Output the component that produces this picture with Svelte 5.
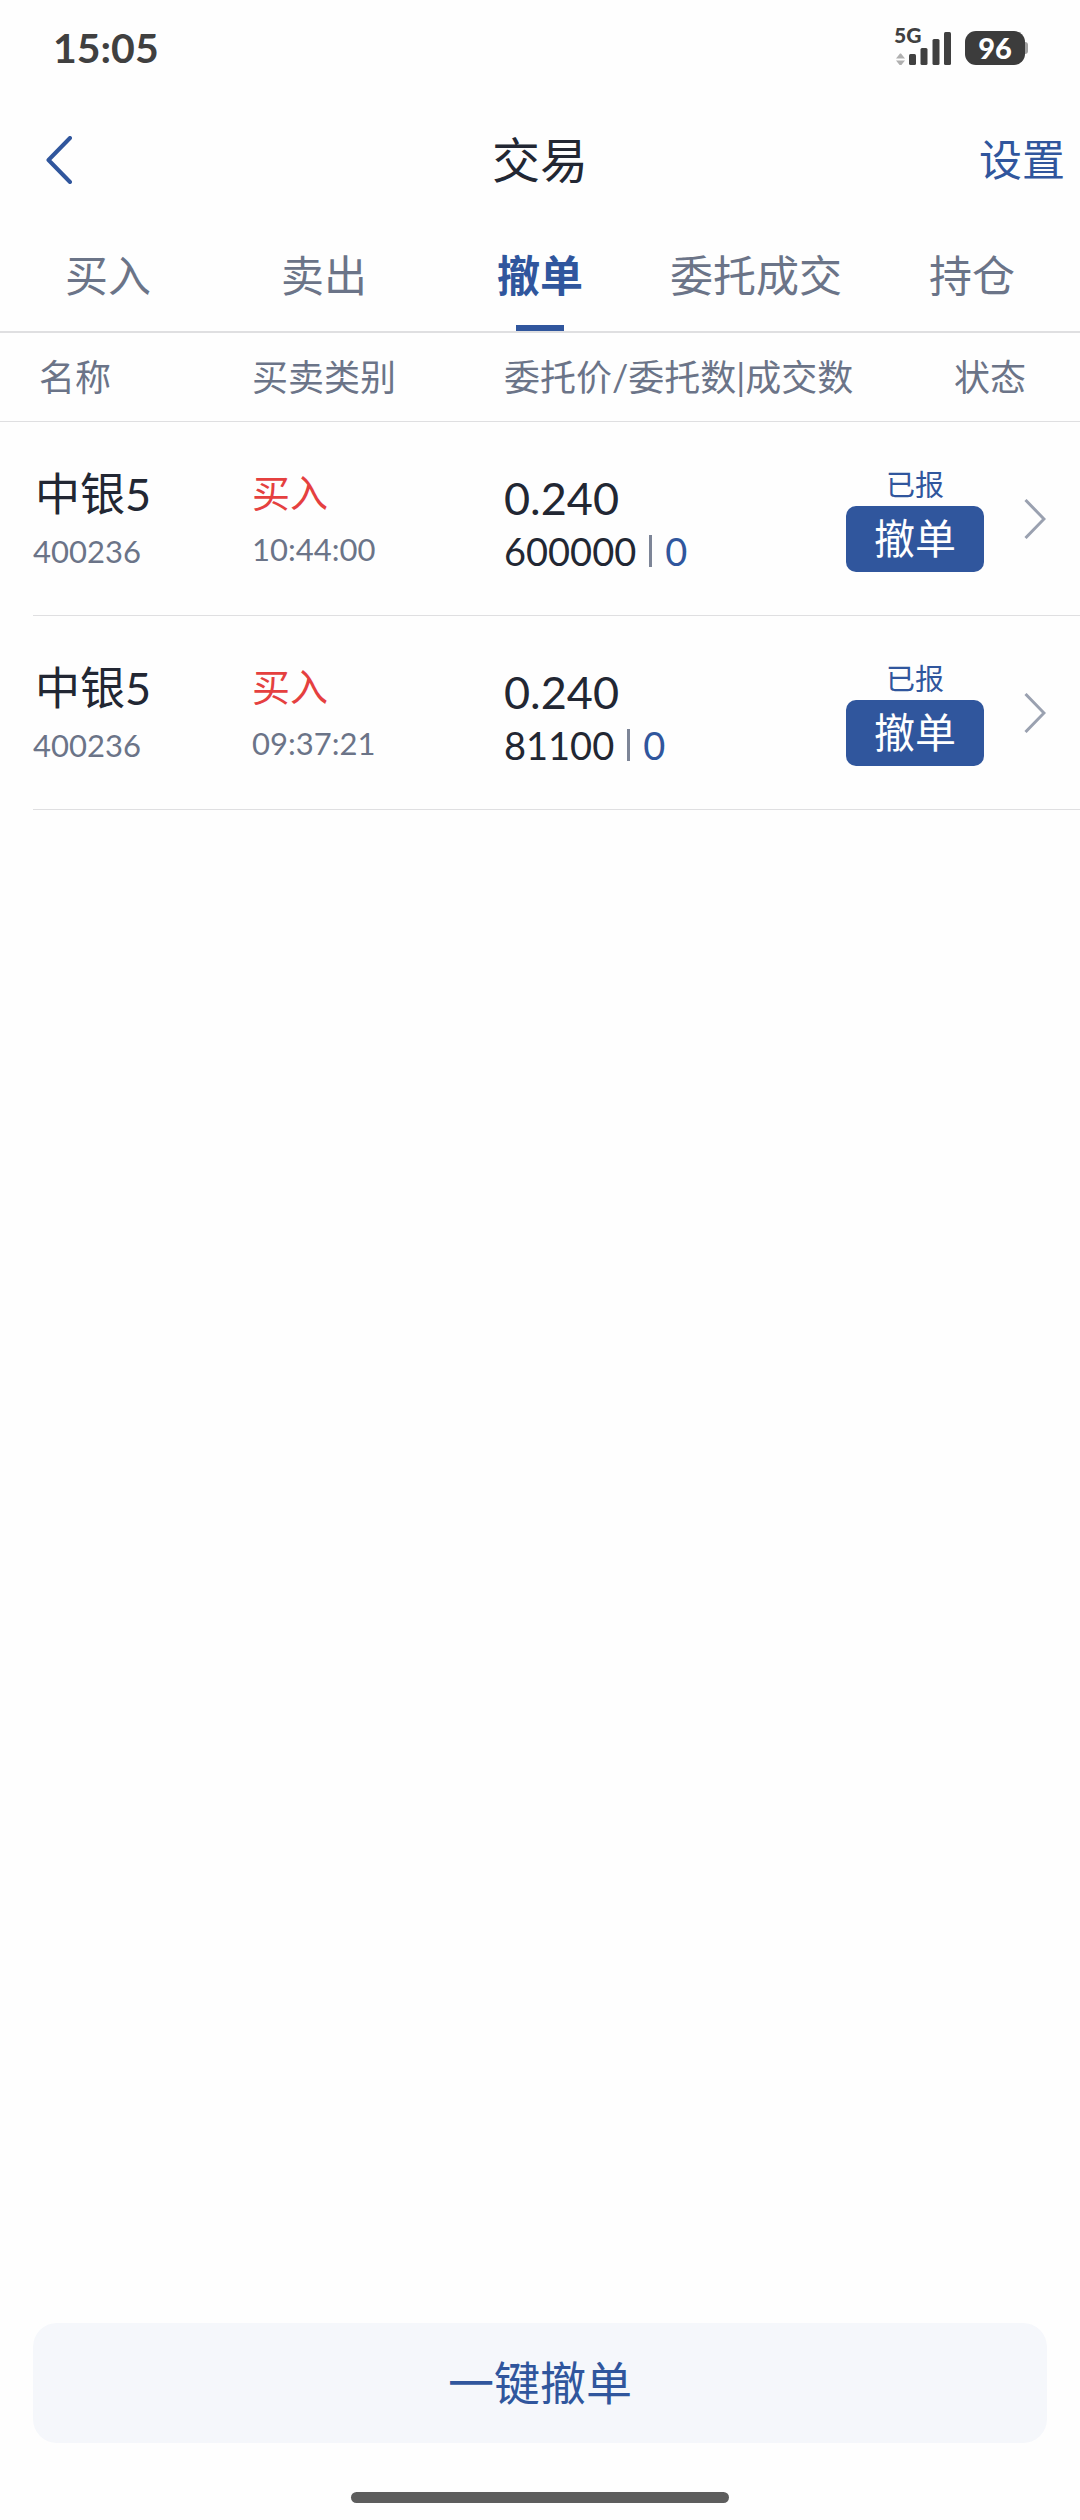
<script>
  let tabs = ['买入', '卖出', '撤单', '委托成交', '持仓']
  let active = $state('撤单')

  let orders = [
    { name: '中银5', code: '400236', side: '买入', time: '10:44:00', price: '0.240', amount: 600000, filled: 0, status: '已报' },
    { name: '中银5', code: '400236', side: '买入', time: '09:37:21', price: '0.240', amount: 81100, filled: 0, status: '已报' }
  ]
</script>

<div class="page">
  <div class="status-bar">
    <span class="clock">15:05</span>
    <div class="indicators">
      <div class="network">
        <span class="generation">5G</span>
        <svg width="58" height="38" viewBox="0 0 58 38" aria-hidden="true">
          <path class="data" d="M2 31.5 6 26.5h1l4 5zM2 33.5h9l-4 5H6z" />
          <rect x="15" y="27" width="7" height="11" rx="1.5" />
          <rect x="26.5" y="21" width="7" height="17" rx="1.5" />
          <rect x="38.5" y="12" width="7" height="26" rx="1.5" />
          <rect x="50" y="5" width="7" height="33" rx="1.5" />
        </svg>
      </div>
      <span class="battery">96</span>
    </div>
  </div>

  <header class="nav">
    <button class="back" aria-label="返回">
      <svg width="26" height="48" viewBox="0 0 26 48" aria-hidden="true">
        <path d="M24 2 2.5 24 24 46" />
      </svg>
    </button>
    <h1>交易</h1>
    <a class="settings" href="#settings">设置</a>
  </header>

  <nav class="tabs">
    {#each tabs as tab}
      <button class="tab" class:active={tab === active} onclick={() => (active = tab)}>{tab}</button>
    {/each}
  </nav>

  <table class="orders">
    <colgroup>
      <col class="col-name" />
      <col class="col-side" />
      <col />
      <col class="col-status" />
      <col class="col-more" />
    </colgroup>
    <thead>
      <tr>
        <th class="name">名称</th>
        <th>买卖类别</th>
        <th>委托价/委托数|成交数</th>
        <th class="state" colspan="2">状态</th>
      </tr>
    </thead>
    <tbody>
      {#each orders as order}
        <tr>
          <td class="name">
            <div class="main">{order.name}</div>
            <div class="sub">{order.code}</div>
          </td>
          <td class="side">
            <div class="main">{order.side}</div>
            <div class="sub">{order.time}</div>
          </td>
          <td class="price">
            <div class="main">{order.price}</div>
            <div class="amount">
              <span>{order.amount}</span>
              <i class="divider"></i>
              <span class="filled">{order.filled}</span>
            </div>
          </td>
          <td class="state">
            <div class="label">{order.status}</div>
            <button class="cancel">撤单</button>
          </td>
          <td class="more">
            <a href="#detail" aria-label="详情">
              <svg width="22" height="40" viewBox="0 0 22 40" aria-hidden="true">
                <path d="M1.5 1 20 20 1.5 39" />
              </svg>
            </a>
          </td>
        </tr>
      {/each}
    </tbody>
  </table>

  <footer>
    <button class="cancel-all">一键撤单</button>
    <div class="home-bar"></div>
  </footer>
</div>

<style>
  :global(body) {
    background: #fefefe;
  }

  .page {
    --blue: #30569d;
    --dark: #222733;
    --grey: #6b7488;
    --line: #dfdfe1;
    display: flex;
    flex-direction: column;
    min-height: 100vh;
    color: var(--dark);
    font-family: Lato, 'Noto Sans CJK SC', sans-serif;
    line-height: 1.2;
  }

  button {
    padding: 0;
    border: 0;
    background: none;
    color: inherit;
    font: inherit;
    cursor: pointer;
  }

  a {
    color: inherit;
    text-decoration: none;
  }

  svg {
    display: block;
    fill: none;
  }

  .status-bar {
    display: flex;
    align-items: center;
    justify-content: space-between;
    height: 96px;
    padding: 0 55px 0 53px;
    color: #404040;
  }

  .clock {
    font-size: 41px;
    font-weight: 700;
  }

  .indicators {
    display: flex;
    align-items: flex-end;
    gap: 13px;
    padding-bottom: 5px;
  }

  .network {
    position: relative;
  }

  .network svg {
    fill: #404040;
  }

  .network .data {
    fill: #b0b0b0;
  }

  .generation {
    position: absolute;
    top: -4px;
    left: 0;
    font-size: 21px;
    font-weight: 900;
    line-height: 24px;
  }

  .battery {
    position: relative;
    width: 60px;
    height: 34px;
    border-radius: 11px;
    background: #3c3c3c;
    color: #fff;
    font-size: 29px;
    font-weight: 900;
    line-height: 34px;
    text-align: center;
  }

  .battery::after {
    content: '';
    position: absolute;
    top: 11px;
    left: 60px;
    width: 3px;
    height: 12px;
    border-radius: 0 3px 3px 0;
    background: #a0a0a0;
  }

  .nav {
    display: grid;
    grid-template-columns: 1fr auto 1fr;
    align-items: center;
    height: 128px;
    padding: 0 15px 0 46px;
  }

  .back {
    justify-self: start;
  }

  .back path {
    stroke: var(--blue);
    stroke-width: 4;
    stroke-linecap: round;
    stroke-linejoin: round;
  }

  h1 {
    margin: 0 31px 0 0;
    font-size: 48px;
    font-weight: 400;
  }

  .settings {
    justify-self: end;
    color: var(--blue);
    font-size: 43px;
  }

  .tabs {
    display: grid;
    grid-template-columns: repeat(5, 1fr);
    border-bottom: 2px solid var(--line);
  }

  .tab {
    position: relative;
    height: 107px;
    padding-bottom: 4px;
    color: var(--grey);
    font-size: 43px;
    white-space: nowrap;
  }

  .tab.active {
    color: var(--blue);
    font-weight: 700;
  }

  .tab.active::after {
    content: '';
    position: absolute;
    bottom: 0;
    left: calc(50% - 24px);
    width: 48px;
    height: 6px;
    background: var(--blue);
  }

  .orders {
    width: 100%;
    table-layout: fixed;
    border-collapse: collapse;
  }

  .col-name,
  .col-side {
    width: 252px;
  }

  .col-status {
    width: 138px;
  }

  .col-more {
    width: 96px;
  }

  th {
    height: 89px;
    padding: 0;
    color: var(--grey);
    font-size: 36px;
    font-weight: 400;
    text-align: left;
    white-space: nowrap;
  }

  th.name {
    padding-left: 39px;
  }

  th.state {
    padding-right: 54px;
    text-align: right;
  }

  thead tr {
    background: linear-gradient(var(--line), var(--line)) no-repeat 0 100% / 100% 1px;
  }

  tbody tr {
    height: 194px;
    background: linear-gradient(var(--line), var(--line)) no-repeat 33px 100% / 100% 1px;
  }

  td {
    padding: 42px 0 0;
    vertical-align: top;
  }

  td.name {
    padding-left: 33px;
  }

  td.side {
    padding-top: 40px;
  }

  td.price {
    padding-top: 46px;
  }

  .main {
    font-size: 45px;
    line-height: 60px;
  }

  .name .main {
    padding-left: 2px;
  }

  .side .main {
    color: #e5403f;
    font-size: 38px;
  }

  .sub {
    color: var(--grey);
    font-size: 31px;
    line-height: 54px;
  }

  .amount {
    display: flex;
    align-items: center;
    gap: 13px;
    font-size: 38px;
    line-height: 46px;
  }

  .divider {
    width: 3px;
    height: 32px;
    background: #7d8597;
  }

  .filled {
    color: var(--blue);
  }

  td.state {
    text-align: center;
  }

  .label {
    color: var(--blue);
    font-size: 29px;
    line-height: 42px;
  }

  .cancel {
    display: block;
    width: 100%;
    height: 66px;
    border-radius: 10px;
    background: var(--blue);
    color: #fff;
    font-size: 41px;
  }

  td.more {
    padding: 0 0 0 40px;
    vertical-align: middle;
  }

  .more path {
    stroke: #9aa1b0;
    stroke-width: 3;
  }

  footer {
    margin-top: auto;
    padding: 0 33px 17px;
  }

  .cancel-all {
    display: block;
    width: 100%;
    height: 120px;
    border-radius: 24px;
    background: #f5f7fb;
    color: var(--blue);
    font-size: 46px;
  }

  .home-bar {
    width: 378px;
    height: 11px;
    margin: 49px auto 0;
    border-radius: 6px;
    background: #5d5d5d;
  }
</style>
